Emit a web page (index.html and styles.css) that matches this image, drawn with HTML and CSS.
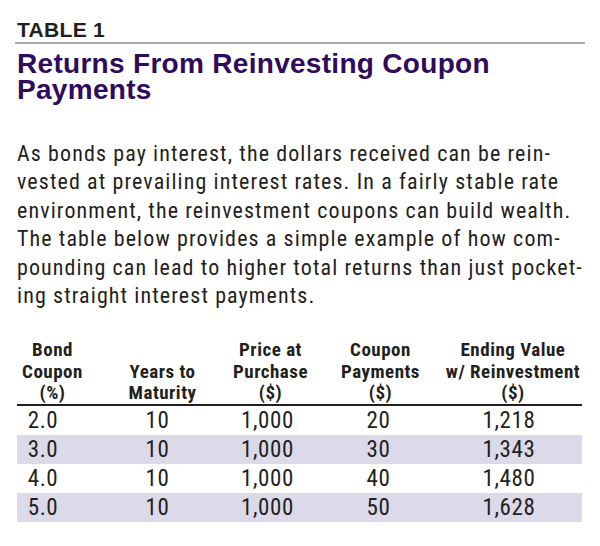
FILE: index.html
```html
<!DOCTYPE html>
<html lang="en">
<head>
<meta charset="utf-8">
<title>Table 1</title>
<link rel="stylesheet" href="styles.css">
</head>
<body>
<div class="page">
  <div class="label">TABLE 1</div>
  <h1 class="title">Returns From Reinvesting Coupon<br>Payments</h1>
  <p class="intro">As bonds pay interest, the dollars received can be rein-<br>vested at prevailing interest rates. In a fairly stable rate<br>environment, the reinvestment coupons can build wealth.<br>The table below provides a simple example of how com-<br>pounding can lead to higher total returns than just pocket-<br>ing straight interest payments.</p>
  <table class="data">
    <colgroup>
      <col class="w1"><col class="w2"><col class="w3"><col class="w4"><col class="w5">
    </colgroup>
    <thead>
      <tr>
        <th class="k1">Bond<br>Coupon<br>(%)</th>
        <th class="k2">Years to<br>Maturity</th>
        <th class="k3">Price at<br>Purchase<br>($)</th>
        <th class="k4">Coupon<br>Payments<br>($)</th>
        <th class="k5">Ending Value<br>w/ Reinvestment<br>($)</th>
      </tr>
    </thead>
    <tbody>
      <tr><td class="k1">2.0</td><td class="k2">10</td><td class="k3">1,000</td><td class="k4">20</td><td class="k5">1,218</td></tr>
      <tr class="shade"><td class="k1">3.0</td><td class="k2">10</td><td class="k3">1,000</td><td class="k4">30</td><td class="k5">1,343</td></tr>
      <tr><td class="k1">4.0</td><td class="k2">10</td><td class="k3">1,000</td><td class="k4">40</td><td class="k5">1,480</td></tr>
      <tr class="shade"><td class="k1">5.0</td><td class="k2">10</td><td class="k3">1,000</td><td class="k4">50</td><td class="k5">1,628</td></tr>
    </tbody>
  </table>
</div>
</body>
</html>
```
FILE: styles.css
```css
html, body {
  margin: 0;
  padding: 0;
  background: #ffffff;
}

.page {
  width: 565px;
  padding: 18px 0 0 17px;
  color: #231f20;
}

.label {
  font-family: "Liberation Sans", Arial, sans-serif;
  font-weight: bold;
  font-size: 21px;
  letter-spacing: 0.3px;
  line-height: 24px;
  height: 26px;
  box-sizing: border-box;
  border-bottom: 2px solid #a9a9a9;
  margin-left: -2px;
  padding-left: 2px;
  width: 570px;
}

.title {
  margin: 7px 0 0;
  font-family: "Liberation Sans", Arial, sans-serif;
  font-weight: bold;
  font-size: 28px;
  letter-spacing: 0.3px;
  line-height: 26px;
  color: #2e0b5e;
}

.intro {
  margin: 37px 0 0;
  font-family: "Roboto Condensed", "DejaVu Sans Condensed", sans-serif;
  font-size: 22px;
  letter-spacing: 1.1px;
  line-height: 28.4px;
  white-space: nowrap;
}

.data {
  margin-top: 29px;
  border-collapse: collapse;
  table-layout: fixed;
  width: 565px;
  font-family: "Roboto Condensed", "DejaVu Sans Condensed", sans-serif;
}

.w1 { width: 84px; }
.w2 { width: 123px; }
.w3 { width: 93px; }
.w4 { width: 127px; }
.w5 { width: 138px; }

.data th {
  font-weight: bold;
  font-size: 19px;
  letter-spacing: 0.5px;
  line-height: 21.3px;
  text-align: center;
  vertical-align: bottom;
  padding: 0 0 1px;
  border-bottom: 2px solid #231f20;
  white-space: nowrap;
}

.data th.k1 { padding-right: 13px; }

.data td {
  font-size: 23px;
  letter-spacing: 0.6px;
  line-height: 29px;
  height: 29px;
  padding: 0;
  text-align: center;
  white-space: nowrap;
}

.data td.k1 { padding-right: 32px; }
.data td.k2 { padding-right: 10px; }
.data td.k3 { padding-right: 6px; }
.data td.k4 { padding-right: 4px; }
.data td.k5 { padding-right: 8px; }

.data .shade td {
  background: #dcd9e9;
}
```
